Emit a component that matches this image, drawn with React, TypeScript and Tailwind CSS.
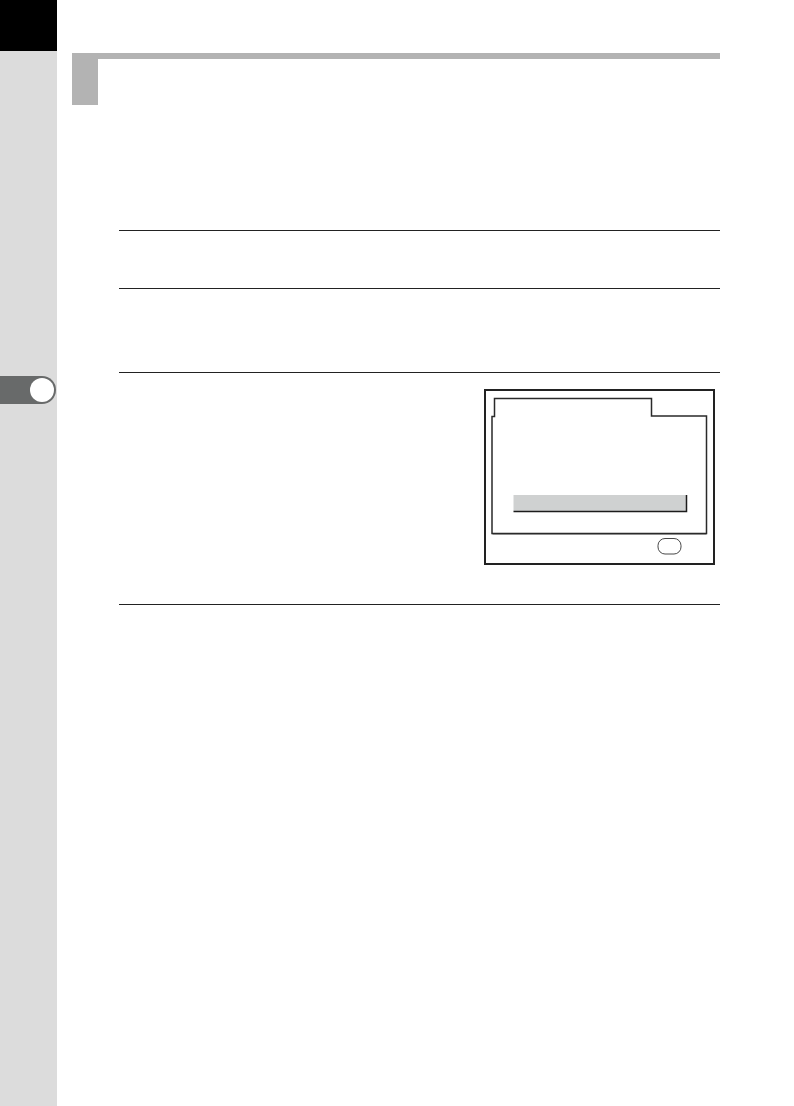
function SideBar() {
  return (
    <aside className="w-[57px] shrink-0 bg-[#dcdcdc] flex flex-col">
      <div className="h-[51px] bg-black" />
      <div className="mt-[325px] h-[28px] w-[56px] bg-[#686a6a] rounded-r-full flex items-center justify-end pr-[2px]">
        <div className="w-[24px] h-[24px] rounded-full bg-white" />
      </div>
    </aside>
  )
}

function ScreenPanel() {
  return (
    <div className="w-[231px] h-[176px] border-2 border-[#222222] bg-white">
      <svg width="227" height="172" viewBox="0 0 227 172" fill="none">
        <path
          d="M6 25.5 H8.5 V7.5 H165.5 V25 H220.5 V142.5 H6 Z"
          stroke="#2a2a2a"
          strokeWidth="1.5"
        />
        <path d="M6.5 143.5 H220.5" stroke="#8c8c8c" strokeWidth="1" />
        <rect x="27.5" y="104" width="172.5" height="16" fill="#cfd1d1" />
        <path d="M27.5 120.5 H200.5 V104" stroke="#1c1c1c" strokeWidth="1.5" />
        <rect x="172" y="147.5" width="23" height="15.5" rx="7" stroke="#333333" strokeWidth="0.9" />
      </svg>
    </div>
  )
}

export default function App() {
  return (
    <div className="flex w-[794px] h-[1106px] bg-white font-['Liberation_Sans',sans-serif]">
      <SideBar />
      <main className="flex-1 pl-[15px] pr-[74px] pt-[53px]">
        <div className="h-[6px] bg-[#b3b3b3]" />
        <div className="w-[26px] h-[46px] bg-[#b3b3b3]" />

        <div className="ml-[47px] mt-[125px]">
          <div className="h-[58px] border-t border-[#222222]" />
          <div className="h-[84px] border-t border-[#222222]" />
          <div className="h-[232px] border-t border-[#222222] flex justify-end pt-[16px] pr-[5px]">
            <ScreenPanel />
          </div>
          <div className="border-t border-[#222222]" />
        </div>
      </main>
    </div>
  )
}
